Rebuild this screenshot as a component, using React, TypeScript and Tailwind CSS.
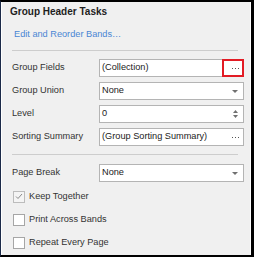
const font = { fontFamily: '"Liberation Sans", Arial, sans-serif' };

const Arrow = () => (
	<svg width="6" height="3" viewBox="0 0 6 3" className="shrink-0">
		<path d="M0 0h6L3 3z" fill="#707070" />
	</svg>
);

const Spinner = () => (
	<div className="flex flex-col gap-[2px] shrink-0">
		<svg width="5" height="3" viewBox="0 0 5 3">
			<path d="M0 3h5L2.5 0z" fill="#707070" />
		</svg>
		<svg width="5" height="3" viewBox="0 0 5 3">
			<path d="M0 0h5L2.5 3z" fill="#707070" />
		</svg>
	</div>
);

const Dots = () => (
	<svg width="7" height="1" viewBox="0 0 7 1" className="shrink-0">
		<rect x="0" y="0" width="1" height="1" fill="#555" />
		<rect x="3" y="0" width="1" height="1" fill="#555" />
		<rect x="6" y="0" width="1" height="1" fill="#555" />
	</svg>
);

const Field = ({
	label,
	value,
	children,
	highlight,
}: {
	label: string;
	value: string;
	children?: React.ReactNode;
	highlight?: boolean;
}) => (
	<div className="flex items-center h-[18px]">
		<div className="w-[87px] text-[9.2px] text-[#333]">{label}</div>
		<div className="relative flex items-center w-[145px] h-[18px] bg-white border border-[#b4b4b4] pl-[2px]">
			<span className="flex-1 text-[9.2px] text-[#222]">{value}</span>
			<div className="w-[14px] h-full flex items-center justify-center mr-[1px]">
				{children}
			</div>
			{highlight && (
				<div className="absolute right-[-1px] top-[-1px] w-[22px] h-[18px] border-2 border-[#e21b24]" />
			)}
		</div>
	</div>
);

const Check = ({ label, checked }: { label: string; checked?: boolean }) => (
	<div className="flex items-center h-[13px] gap-[4px]">
		<div
			className={
				checked
					? "w-[12px] h-[12px] border border-[#bcbcbc] bg-[#f4f4f4] flex items-center justify-center"
					: "w-[12px] h-[12px] border border-[#a6a6a6] bg-white"
			}
		>
			{checked && (
				<svg width="8" height="7" viewBox="0 0 8 7">
					<path d="M1 3.5 3 5.5 7 1" fill="none" stroke="#8a8a8a" strokeWidth="1" />
				</svg>
			)}
		</div>
		<span className="text-[9.2px] text-[#333]">{label}</span>
	</div>
);

export default function App() {
	return (
		<div
			style={font}
			className="w-[254px] h-[257px] border-t-2 border-b-2 border-r-[3px] border-l border-t-black border-b-black border-r-black border-l-[#1b2a48]"
		>
			<div className="h-full bg-[#f0f0f0] border-l border-r border-white pr-[2px] flex flex-col">
				<div className="h-[18px] flex items-center pl-[8px] pt-[1px] text-[10px] font-bold text-[#1e1e1e]">
					Group Header Tasks
				</div>
				<div className="h-[30px] flex items-center pl-[12px] text-[9.2px] text-[#4a86d4]">
					Edit and Reorder Bands…
				</div>
				<div className="mx-[10px] h-px bg-[#cdcdcd]" />
				<div className="pl-[10px] mt-[8px] flex flex-col gap-[5px]">
					<Field label="Group Fields" value="(Collection)" highlight>
						<Dots />
					</Field>
					<Field label="Group Union" value="None">
						<Arrow />
					</Field>
					<Field label="Level" value="0">
						<Spinner />
					</Field>
					<Field label="Sorting Summary" value="(Group Sorting Summary)">
						<Dots />
					</Field>
				</div>
				<div className="mx-[10px] mt-[8px] h-px bg-[#cdcdcd]" />
				<div className="pl-[10px] mt-[9px]">
					<Field label="Page Break" value="None">
						<Arrow />
					</Field>
				</div>
				<div className="pl-[11px] mt-[8px] flex flex-col gap-[10px]">
					<Check label="Keep Together" checked />
					<Check label="Print Across Bands" />
					<Check label="Repeat Every Page" />
				</div>
			</div>
		</div>
	);
}
